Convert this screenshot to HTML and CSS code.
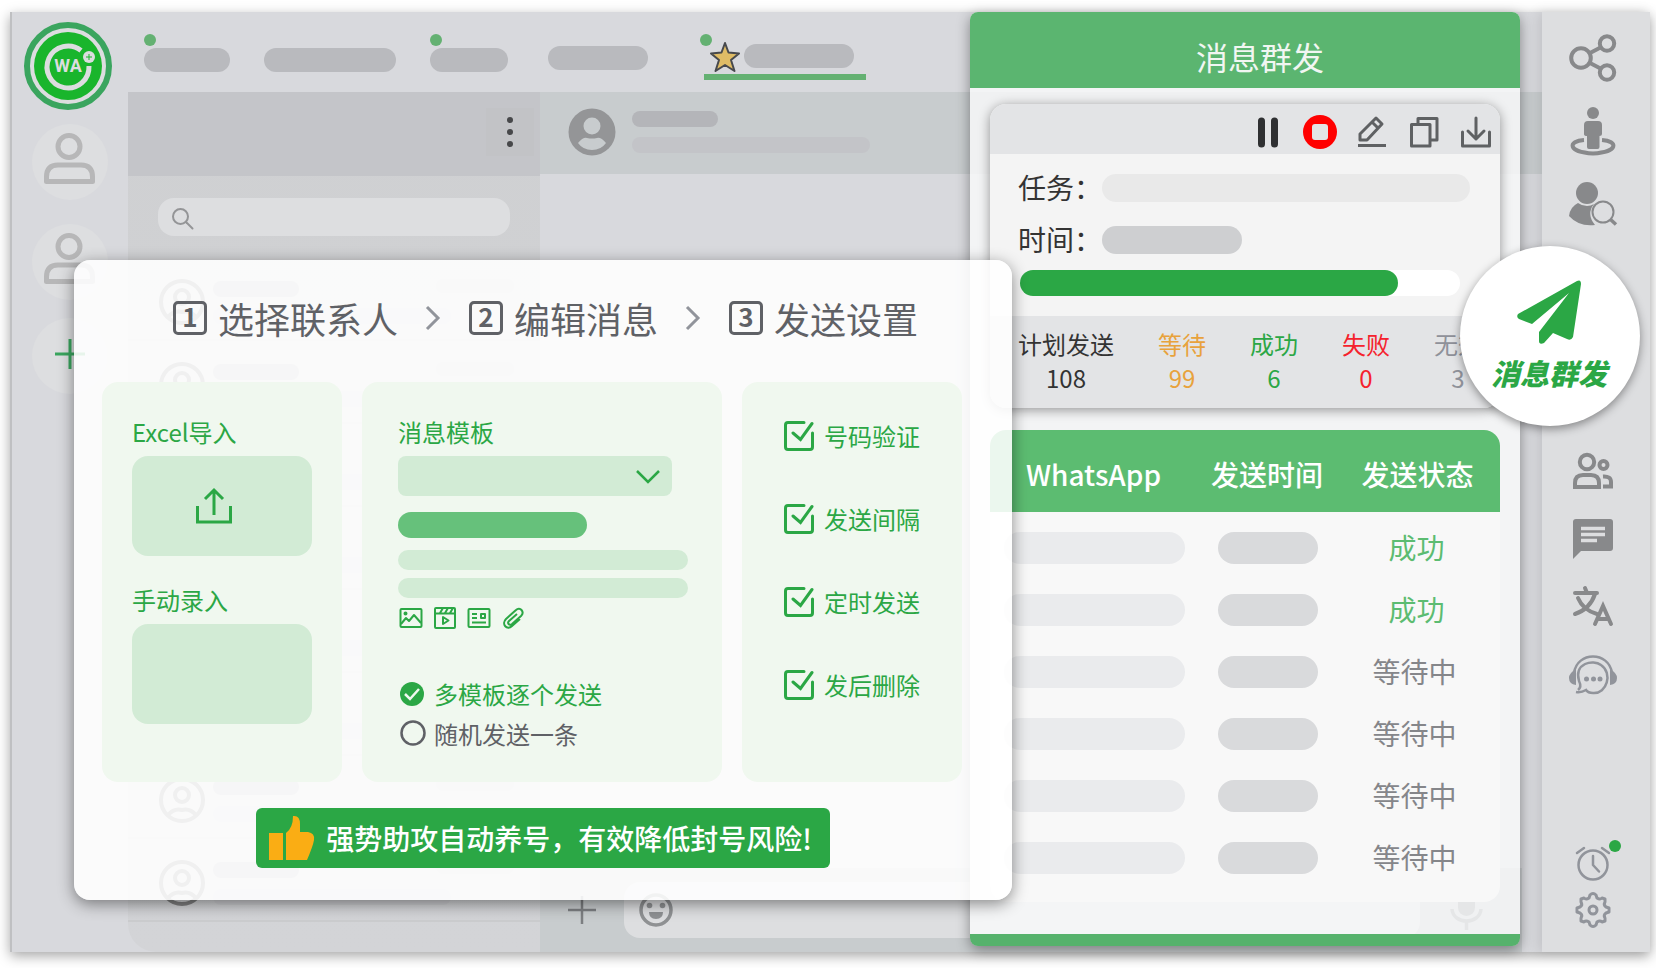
FILE: index.html
```html
<!DOCTYPE html>
<html lang="zh-CN">
<head>
<meta charset="utf-8">
<meta name="viewport" content="width=device-width, initial-scale=1">
<title>消息群发</title>
<link rel="stylesheet" href="styles.css">
</head>
<body>
<svg class="defs" aria-hidden="true">
  <symbol id="i-person" viewBox="0 0 52 54"><circle cx="25" cy="14.500" r="11" /><path d="M2.500 49.500V45Q2.500 33 14 33H37Q48.500 33 48.500 45V49.500Z" stroke-linejoin="round"/></symbol>
  <symbol id="i-contact" viewBox="0 0 46 46"><circle cx="23" cy="23" r="21"/><circle cx="23" cy="18" r="7"/><path d="M9 38Q15 31 23 33Q31 31 37 38"/></symbol>
  <symbol id="i-chev" viewBox="0 0 16 26"><path d="M2 2L13 13L2 24"/></symbol>
  <symbol id="i-check" viewBox="0 0 30 30"><path d="M20 1.500H4Q1.500 1.500 1.500 4V26Q1.500 28.500 4 28.500H26Q28.500 28.500 28.500 26V12"/><path d="M9 12L16.500 18.500L28 2.500"/></symbol>
</svg>

<div class="app">
  <nav class="rail-left">
    <svg class="logo" viewBox="0 0 88 88" role="img" aria-label="WA">
      <circle cx="44" cy="44" r="41" fill="#dcdddf" stroke="#3aa55e" stroke-width="6"/>
      <circle cx="44" cy="44" r="34" fill="#19b52c"/>
      <path d="M57 28.500A21 21 0 1 0 65 44" fill="none" stroke="#dcdddf" stroke-width="5"/>
      <circle cx="65" cy="35" r="6" fill="#dcdddf"/>
      <path d="M62 35H68M65 32V38" stroke="#19b52c" stroke-width="1"/>
      <text x="44" y="50" class="logo-text">WA</text>
    </svg>
    <button class="account" aria-label="账号 1"><svg><use href="#i-person"/></svg></button>
    <button class="account second" aria-label="账号 2"><svg><use href="#i-person"/></svg></button>
    <button class="account add" aria-label="添加账号"><svg viewBox="0 0 30 30"><path d="M0 15H30M15 0V30"/></svg></button>
  </nav>

  <div class="main">
    <div class="tabs">
      <button class="tab online w1" aria-label="标签 1"><i class="pill"></i></button>
      <button class="tab w2" aria-label="标签 2"><i class="pill"></i></button>
      <button class="tab online w3" aria-label="标签 3"><i class="pill"></i></button>
      <button class="tab w4" aria-label="标签 4"><i class="pill"></i></button>
      <button class="tab online active w5" aria-label="标签 5">
        <svg viewBox="0 0 32 32"><path d="M16 2L19.500 11.500L30 12.500L22 19L25.500 30L16 24L6.500 30L10 19L2 12.500L12.500 11.500Z"/></svg>
        <i class="pill"></i>
      </button>
    </div>
    <div class="workspace">
      <section class="list">
        <header class="list-head">
          <button class="more" aria-label="更多"><i></i><i></i><i></i></button>
        </header>
        <div class="search">
          <svg viewBox="0 0 22 22"><circle cx="8.500" cy="8.500" r="7.500"/><path d="M14.500 14.500L20.500 20.500"/></svg>
          <input type="search" aria-label="搜索">
        </div>
        <ul class="contacts">
          <li><svg><use href="#i-contact"/></svg><div><i></i><i></i></div><i class="when"></i></li>
          <li><svg><use href="#i-contact"/></svg><div><i></i><i></i></div><i class="when"></i></li>
          <li><svg><use href="#i-contact"/></svg><div><i></i><i></i></div><i class="when"></i></li>
          <li><svg><use href="#i-contact"/></svg><div><i></i><i></i></div><i class="when"></i></li>
          <li><svg><use href="#i-contact"/></svg><div><i></i><i></i></div><i class="when"></i></li>
          <li><svg><use href="#i-contact"/></svg><div><i></i><i></i></div><i class="when"></i></li>
          <li><svg><use href="#i-contact"/></svg><div><i></i><i></i></div><i class="when"></i></li>
          <li><svg><use href="#i-contact"/></svg><div><i></i><i></i></div><i class="when"></i></li>
        </ul>
      </section>
      <section class="chat">
        <header class="chat-head">
          <svg viewBox="0 0 48 48"><circle cx="24" cy="24" r="23.500" fill="#949597"/><ellipse cx="24" cy="18" rx="8.500" ry="8.500" fill="#c8ccce"/><path d="M10 35Q15 29 19 30Q24 31 29 30Q33 29 38 35Q33 42 24 42Q15 42 10 35Z" fill="#c8ccce"/></svg>
          <div><i class="line name"></i><i class="line status"></i></div>
        </header>
        <footer class="composer">
          <button class="plus" aria-label="附件"><svg viewBox="0 0 30 30"><path d="M1 15H29M15 1V29"/></svg></button>
          <div class="compose-box">
            <svg class="smile" viewBox="0 0 34 34"><circle cx="17" cy="17" r="15" fill="none" stroke="#8f9193" stroke-width="3.500"/><circle cx="10.500" cy="12.500" r="2.800"/><circle cx="23.500" cy="12.500" r="2.800"/><path d="M10 19H24Q24 26 17 26Q10 26 10 19Z"/></svg>
            <input type="text" aria-label="输入消息">
          </div>
          <button class="mic" aria-label="语音"><svg viewBox="0 0 32 40"><rect x="8" y="1" width="17" height="25" rx="8.500" fill="#8f9896"/><path d="M2 19C3 35 30 35 31 19M16.500 31V40" fill="none" stroke="#8f9896" stroke-width="3.500"/></svg></button>
        </footer>
      </section>
    </div>
  </div>

  <nav class="rail-right">
    <button aria-label="分享"><svg viewBox="0 0 48 48" class="stroke"><circle cx="12" cy="24" r="9.800"/><circle cx="38" cy="9.500" r="7.200"/><circle cx="38" cy="38.500" r="7.200"/><path d="M21 19L31.500 13.500M21 29L31.500 34.500"/></svg></button>
    <button aria-label="引流"><svg viewBox="0 0 48 48" class="solid"><circle cx="24" cy="6" r="6"/><path d="M19 14H29Q33 14 33 18V27Q33 29 30.500 29V40Q30.500 42 28.500 42H20Q18 42 18 40V29Q15 29 15 27V18Q15 14 19 14Z"/><path d="M15 33C-1 34-2 45 24 46.500C50 45 49 34 33 33" fill="none" stroke="#88898b" stroke-width="4"/></svg></button>
    <button aria-label="客户查询"><svg viewBox="0 0 48 48" class="solid"><circle cx="18" cy="13" r="11"/><path d="M9 23Q13 26 18 26Q22 26 25 24Q17 34 26 45Q10 47 0 36Q1 27 9 23Z"/><g fill="none" stroke="#88898b"><circle cx="34" cy="32" r="10.500" stroke-width="2"/><path d="M41.500 39.500L47 44.500" stroke-width="3.500"/></g></svg></button>
    <button class="after-float" aria-label="群组"><svg viewBox="0 0 48 48" class="stroke"><circle cx="18" cy="15" r="7.200"/><circle cx="34.500" cy="18" r="4"/><path d="M6 40V36Q6 28 14 28H22Q30 28 30 36V40Z"/><path d="M34 29.500Q42 29 42 35V39.500H34"/></svg></button>
    <button aria-label="快捷回复"><svg viewBox="0 0 48 48"><path d="M7 4H41Q44 4 44 7V33Q44 36 41 36H12L4 44V7Q4 4 7 4Z" fill="#88898b"/><path d="M12 13.500H36M12 19.500H36M12 25.500H28" stroke="#dddee0" stroke-width="3.500"/></svg></button>
    <button aria-label="翻译"><svg viewBox="0 0 48 48" class="stroke round"><path d="M6 10H28M16 5L18 10M26 11Q21 26 6 31M9 15Q14 27 28 31M26 41L34 23L42 41M30 36H38"/></svg></button>
    <button aria-label="客服"><svg viewBox="0 0 48 48" class="grey"><path d="M5 22C8 0 40 0 43 22M9 39Q13 36 10 30C5 12 24 8 32 14C44 22 38 43 24 42Q19 42 17 39Q12 42 7 41" fill="none" stroke="#91949b" stroke-width="2.500"/><path d="M7 18V34Q0 33 0 27Q0 22 7 18ZM41 18V34Q48 33 48 27Q48 22 41 18Z"/><circle cx="17.500" cy="28" r="2.500"/><circle cx="24.500" cy="28" r="2.500"/><circle cx="31" cy="28" r="2.500"/></svg></button>
    <span class="spring"></span>
    <button class="notify" aria-label="提醒"><svg viewBox="0 0 48 48" class="stroke grey2"><circle cx="24" cy="26" r="14.500"/><path d="M24 17V26L30 32.500M8 14L15 9M33 9L40 14"/></svg></button>
    <button aria-label="设置"><svg viewBox="0 0 48 48" class="stroke grey2 gear"><circle cx="24" cy="24" r="4"/><path d="M21 9Q24 6 27 9L28 12Q31 14 33 12L36 13L36 16Q34 19 37 21L40 22V26L37 27Q34 29 36 32L36 35L33 36Q31 34 28 36L27 39Q24 42 21 39L20 36Q17 34 15 36L12 35L12 32Q14 29 11 27L8 26V22L11 21Q14 19 12 16L12 13L15 12Q17 14 20 12Z"/></svg></button>
  </nav>

  <aside class="panel">
    <h1>消息群发</h1>
    <div class="panel-body">
      <section class="task">
        <div class="task-tools">
          <button aria-label="暂停"><svg viewBox="0 0 34 34"><path d="M10.500 6V29M23.500 6V29" stroke="#2f3032" stroke-width="7" stroke-linecap="round"/></svg></button>
          <button aria-label="停止"><svg viewBox="0 0 34 34"><circle cx="17" cy="17" r="17" fill="#f00"/><rect x="9" y="9" width="16" height="16" rx="3" fill="#e3e4e6"/></svg></button>
          <button aria-label="编辑"><svg viewBox="0 0 34 34" class="tool"><path d="M3 30.500H31M5 25V19L21 3L27 9L12 25ZM17 7L23 13"/></svg></button>
          <button aria-label="复制"><svg viewBox="0 0 34 34" class="tool"><path d="M4.500 9.500H23V31H4.500ZM11 9V3.500H30V25H24"/></svg></button>
          <button aria-label="下载"><svg viewBox="0 0 34 34" class="tool"><path d="M3.500 17V31H30.500V17M17 3V24M9 16L17 24L25 16" stroke-linecap="round"/></svg></button>
        </div>
        <div class="task-info">
          <div class="field"><span>任务：</span><i class="long"></i></div>
          <div class="field"><span>时间：</span><i class="short"></i></div>
          <div class="progress" role="progressbar" aria-label="发送进度" aria-valuenow="86"><i></i></div>
        </div>
        <dl class="stats">
          <div><dt>计划发送</dt><dd>108</dd></div>
          <div class="wait"><dt>等待</dt><dd>99</dd></div>
          <div class="ok"><dt>成功</dt><dd>6</dd></div>
          <div class="fail"><dt>失败</dt><dd>0</dd></div>
          <div class="void"><dt>无效</dt><dd>3</dd></div>
        </dl>
      </section>
      <div class="table-wrap">
        <table>
          <thead><tr><th class="c1">WhatsApp</th><th class="c2">发送时间</th><th>发送状态</th></tr></thead>
          <tbody>
            <tr><td><i class="num"></i></td><td><i class="time"></i></td><td class="state done">成功</td></tr>
            <tr><td><i class="num"></i></td><td><i class="time"></i></td><td class="state done">成功</td></tr>
            <tr><td><i class="num"></i></td><td><i class="time"></i></td><td class="state">等待中</td></tr>
            <tr><td><i class="num"></i></td><td><i class="time"></i></td><td class="state">等待中</td></tr>
            <tr><td><i class="num"></i></td><td><i class="time"></i></td><td class="state">等待中</td></tr>
            <tr><td><i class="num"></i></td><td><i class="time"></i></td><td class="state">等待中</td></tr>
          </tbody>
        </table>
      </div>
    </div>
  </aside>

  <section class="wizard">
    <ol class="steps">
      <li><b>1</b>选择联系人</li>
      <li class="sep" aria-hidden="true"><svg><use href="#i-chev"/></svg></li>
      <li><b>2</b>编辑消息</li>
      <li class="sep" aria-hidden="true"><svg><use href="#i-chev"/></svg></li>
      <li><b>3</b>发送设置</li>
    </ol>
    <div class="columns">
      <div class="col import">
        <label for="excel">Excel导入</label>
        <button id="excel" class="drop"><svg viewBox="0 0 36 36"><path d="M1.500 18V34H34.500V18M18 2V27M9 11L18 2L27 11"/></svg></button>
        <label for="manual">手动录入</label>
        <textarea id="manual" class="drop"></textarea>
      </div>
      <div class="col template">
        <label for="tpl">消息模板</label>
        <div class="select"><select id="tpl"></select><svg viewBox="0 0 24 14"><path d="M1 1L12 12L23 1"/></svg></div>
        <i class="bar strong"></i>
        <i class="bar"></i>
        <i class="bar last"></i>
        <div class="media">
          <button aria-label="图片"><svg viewBox="0 0 24 24"><rect x="1.500" y="3" width="21" height="18" rx="1"/><path d="M2 18L7 12L10 15L15 9L22 17"/><circle cx="6.500" cy="7.500" r="1"/></svg></button>
          <button aria-label="视频"><svg viewBox="0 0 24 24"><rect x="2" y="2" width="20" height="20" rx="1"/><path d="M2 7.500H22M7 7L10 2M12 7L15 2M17 7L20 2M10 11V18L15.500 14.500Z"/></svg></button>
          <button aria-label="名片"><svg viewBox="0 0 24 24"><rect x="1.500" y="3" width="21" height="18" rx="1"/><path d="M5 8H10M5 12H10M5 16.500H19M14 8H18V12H14Z"/></svg></button>
          <button aria-label="附件"><svg viewBox="0 0 24 24"><path d="M19 13L11 20C6 25 0 18 5 13L15 4C19 0 24 6 20 10L11 18C8 20 6 17 8 15L16 8"/></svg></button>
        </div>
        <div class="modes">
          <label class="on"><input type="radio" name="mode" checked><svg viewBox="0 0 26 26"><circle cx="12" cy="13" r="12" fill="#2ba745"/><path d="M5 13L10 18L19 8" fill="none" stroke="#f0f8ef" stroke-width="2.500"/></svg>多模板逐个发送</label>
          <label><input type="radio" name="mode"><svg viewBox="0 0 26 26"><circle cx="13" cy="12" r="11.500" fill="none" stroke="#5f6166" stroke-width="2.500"/></svg>随机发送一条</label>
        </div>
      </div>
      <div class="col options">
        <label><input type="checkbox" checked><svg><use href="#i-check"/></svg>号码验证</label>
        <label><input type="checkbox" checked><svg><use href="#i-check"/></svg>发送间隔</label>
        <label><input type="checkbox" checked><svg><use href="#i-check"/></svg>定时发送</label>
        <label><input type="checkbox" checked><svg><use href="#i-check"/></svg>发后删除</label>
      </div>
    </div>
    <p class="banner">
      <svg viewBox="0 0 46 46"><path d="M0 18H14V45H0ZM17 18Q24 13 24 1Q31 0 31 9V17H39Q46 18 45 25Q44 31 38 45H17Z" fill="#faad14"/></svg>
      强势助攻自动养号，有效降低封号风险!
    </p>
  </section>

  <button class="float">
    <svg viewBox="0 0 64 64"><path d="M60 1Q64-1 64 4L56 57Q54 61 50 59L36 53L27 63Q22 65 22 61V52L52 13L15 44L2 39Q-1 37 1 34Z" fill="#2ba745"/></svg>
    消息群发
  </button>
</div>
</body>
</html>
```

FILE: styles.css
```css
* { box-sizing: border-box; }

body {
  margin: 0;
  background: #fff;
  color: #333;
  font-family: "Noto Sans CJK SC", "Noto Sans", sans-serif;
  font-size: 24px;
  overflow-x: hidden;
}

button {
  display: block;
  margin: 0;
  padding: 0;
  border: 0;
  background: none;
  color: inherit;
  font: inherit;
}

input, select, textarea { margin: 0; border: 0; outline: 0; background: none; appearance: none; font: inherit; }
ul, ol, dl, dd, h1, p { margin: 0; padding: 0; list-style: none; font-weight: 400; }
i { display: block; font-style: normal; }
svg { display: block; flex: none; overflow: visible; }
.defs { position: absolute; width: 0; height: 0; }

.app {
  position: relative;
  display: flex;
  min-height: calc(100vh - 28px);
  margin: 12px 6px 16px 10px;
  border-left: 2px solid #bfc0c2;
  background: #d8d9dd;
  box-shadow: 0 4px 12px rgba(0, 0, 0, .35);
}

/* left rail */
.rail-left {
  display: flex;
  flex: none;
  flex-direction: column;
  align-items: center;
  width: 116px;
  padding-top: 10px;
}
.logo { width: 88px; height: 88px; margin: 0 4px 14px 0; }
.logo-text { fill: #dcdddf; font: 700 18px Roboto, sans-serif; text-anchor: middle; }
.account {
  display: flex;
  justify-content: center;
  width: 76px;
  height: 76px;
  margin-bottom: 24px;
  padding-top: 8px;
  border-radius: 50%;
  background: #dddee0;
}
.account svg { width: 52px; height: 54px; fill: none; stroke: #b7b7b8; stroke-width: 5; }
.account.second { margin-bottom: 18px; }
.account.add { padding-top: 21px; }
.account.add svg { width: 30px; height: 30px; stroke: #3aa55e; stroke-width: 3; }

/* tabs */
.main { display: flex; flex: 1; flex-direction: column; min-width: 0; }
.tabs { display: flex; height: 80px; padding-left: 16px; }
.tab { position: relative; display: flex; align-items: flex-start; height: 68px; padding-top: 36px; margin-right: 34px; }
.tab .pill { flex: 1; height: 24px; border-radius: 12px; background: #b9babe; }
.tab.online::before {
  content: "";
  position: absolute;
  top: 22px;
  left: 0;
  width: 12px;
  height: 12px;
  border-radius: 50%;
  background: #64b172;
}
.w1 { width: 86px; }
.w2 { width: 132px; }
.w3 { width: 78px; margin-right: 40px; }
.w4 { width: 100px; margin-right: 56px; padding-top: 34px; }
.w5 { width: 162px; margin-right: 0; padding: 32px 12px 0 5px; border-bottom: 6px solid #64b172; }
.w5 svg { width: 32px; height: 32px; margin: -3px 3px 0 0; fill: #dfbc66; stroke: #47494d; stroke-width: 2; stroke-linejoin: round; }
.tab.active::before { left: -4px; }

.workspace { display: flex; flex: 1; }

/* contact list */
.list {
  flex: none;
  width: 412px;
  border-bottom-left-radius: 28px;
  background: linear-gradient(#cfd0d2, #d3d4d7);
}
.list-head { display: flex; align-items: center; justify-content: flex-end; height: 84px; padding-right: 6px; background: #c4c5c9; }
.more { display: flex; flex-direction: column; align-items: center; justify-content: center; gap: 6px; width: 48px; height: 48px; margin-bottom: 4px; background: #c2c3c6; }
.more i { width: 6px; height: 6px; border-radius: 50%; background: #47484a; }
.search { display: flex; align-items: center; gap: 8px; height: 38px; margin: 22px 30px; padding: 3px 14px 0; border-radius: 16px; background: #dddee0; }
.search svg { width: 22px; height: 22px; fill: none; stroke: #949597; stroke-width: 2; stroke-linecap: round; }
.search input { flex: 1; min-width: 0; height: 30px; }
.contacts li { display: flex; align-items: flex-start; height: 83px; padding: 21px 26px 0 31px; border-bottom: 2px solid #cbccce; }
.contacts svg { width: 46px; height: 46px; margin-right: 8px; fill: none; stroke: #808182; stroke-width: 4; }
.contacts div { flex: 1; }
.contacts div i { width: 86px; height: 16px; margin: 2px 0 11px; border-radius: 8px; background: #b4b5b8; }
.contacts div i + i { width: 238px; background: #cdced1; }
.contacts .when { width: 78px; height: 14px; margin-left: -80px; border-radius: 7px; background: #c9cacd; }

/* conversation */
.chat { display: flex; flex: 1; flex-direction: column; justify-content: space-between; min-width: 0; }
.chat-head { display: flex; align-items: center; gap: 16px; height: 82px; padding: 0 28px 2px; background: #c8ccce; }
.chat-head svg { width: 48px; height: 48px; }
.line { height: 16px; border-radius: 8px; }
.line.name { width: 86px; margin-bottom: 10px; background: #b4b5b9; }
.line.status { width: 238px; background: #c3c4c8; }
.composer { display: flex; align-items: center; height: 84px; margin-right: 20px; padding-left: 27px; background: #c8ccce; }
.plus svg { width: 30px; height: 30px; stroke: #7d7f82; stroke-width: 2.5; }
.compose-box { display: flex; flex: 1; align-items: center; gap: 12px; min-width: 0; height: 56px; margin: 0 30px 0 27px; padding: 0 15px; border-radius: 16px; background: #dddee0; }
.compose-box input { flex: 1; min-width: 0; }
.smile { width: 34px; height: 34px; fill: #8f9193; }
.mic { margin-right: 40px; }
.mic svg { width: 32px; height: 40px; }

/* right rail */
.rail-right {
  position: relative;
  display: flex;
  flex: none;
  flex-direction: column;
  align-items: center;
  gap: 20px;
  width: 108px;
  padding: 22px 7px 18px 0;
  background: #dddee0;
  box-shadow: -4px 0 12px rgba(0, 0, 0, .1);
}
.rail-right button { position: relative; margin-bottom: 5px; }
.rail-right svg { width: 48px; height: 48px; }
.rail-right .after-float { margin-top: 194px; }
.rail-right .after-float, .rail-right .after-float ~ button { margin-bottom: 0; }
.spring { flex: 1; }
.rail-right .after-float ~ .notify { margin-bottom: -21px; }
.notify::after {
  content: "";
  position: absolute;
  top: 1px;
  right: -4px;
  width: 12px;
  height: 12px;
  border-radius: 50%;
  background: #2ba745;
}
.solid { fill: #88898b; }
.grey { fill: #91949b; }
.stroke { fill: none; stroke: #88898b; stroke-width: 4; }
.round { stroke-linecap: round; }
.grey2 { stroke: #91949b; stroke-width: 2.5; stroke-linecap: round; stroke-linejoin: round; }
.gear { stroke-width: 3; }

/* bulk message panel */
.panel {
  position: absolute;
  top: 0;
  right: 130px;
  bottom: 6px;
  width: 550px;
  border-bottom: 12px solid #56b26c;
  border-radius: 8px;
  background: rgba(250, 250, 251, .8);
  background-clip: padding-box;
  box-shadow: 0 4px 14px rgba(0, 0, 0, .4);
}
.panel h1 {
  height: 76px;
  padding: 10px 0 0 30px;
  border-radius: 8px 8px 0 0;
  background: #5bb570;
  color: #f1f6f2;
  font-size: 32px;
  line-height: 68px;
  text-align: center;
}
.panel-body { padding: 16px 20px 32px; }
.task { overflow: hidden; border-radius: 16px; background: #f4f4f4; box-shadow: 0 2px 12px rgba(0, 0, 0, .4); }
.task-tools { display: flex; justify-content: flex-end; gap: 18px; height: 50px; padding: 11px 7px; background: #e3e4e6; }
.task-tools button { height: 34px; }
.task-tools svg { width: 34px; height: 34px; }
.tool { fill: none; stroke: #5f6163; stroke-width: 3; stroke-linejoin: round; }
.task-info { padding: 20px 30px 20px 28px; }
.field { display: flex; align-items: center; height: 28px; margin-bottom: 24px; font-size: 28px; line-height: 26px; }
.field span { width: 84px; height: 28px; }
.field i { height: 28px; border-radius: 14px; }
.field .long { flex: 1; background: #e9e9e9; }
.field .short { width: 140px; background: #cecfd1; }
.progress { height: 26px; margin: -8px 10px 0 2px; border-radius: 13px; background: #fff; }
.progress i { width: 86%; height: 26px; border-radius: 13px; background: #2ba745; }
.stats { display: flex; gap: 44px; padding: 11px 0 13px 28px; background: #e3e4e6; line-height: 34px; text-align: center; white-space: nowrap; }
.wait { color: #e8a23c; }
.ok { color: #2ba745; }
.fail { color: #f5222d; }
.void { color: #8f9199; }

.table-wrap { margin-top: 22px; padding-bottom: 13px; overflow: hidden; border-radius: 16px; background: #f8f8f8; }
table { width: 100%; border-collapse: separate; border-spacing: 0; table-layout: fixed; font-size: 28px; line-height: 40px; text-align: center; }
th { height: 87px; padding: 6px 2px 0 0; border-bottom: 5px solid #f8f8f8; background: #5cbc71; color: #fff; font-weight: 500; }
.c1 { width: 41%; }
.c2 { width: 27%; }
td { height: 62px; padding: 0; color: #85868a; }
.state { padding: 0 8px 3px 0; }
.done { padding-right: 4px; color: #5cbc71; }
.num, .time { height: 32px; margin: 0 auto; border-radius: 16px; }
.num { margin: 0 14px; background: #eaebed; }
.time { width: 100px; background: #d9dadc; }

/* wizard */
.wizard {
  position: absolute;
  top: 248px;
  left: 62px;
  right: 638px;
  padding: 38px 50px 32px 28px;
  border-radius: 16px;
  background: rgba(255, 255, 255, .88);
  box-shadow: 0 4px 16px rgba(0, 0, 0, .45);
}
.steps { display: flex; align-items: center; height: 40px; margin-bottom: 44px; padding-left: 71px; color: #5f6166; font-size: 36px; line-height: 40px; white-space: nowrap; }
.steps li { display: flex; align-items: center; }
.steps b {
  width: 34px;
  height: 34px;
  margin-right: 11px;
  border: 3px solid #5f6166;
  border-radius: 5px;
  font: 700 26px/24px "Noto Sans CJK SC", sans-serif;
  text-align: center;
}
.steps .sep { margin: 0 28px 0 27px; }
.steps svg { width: 16px; height: 26px; fill: none; stroke: #91949b; stroke-width: 3; }
.columns { display: grid; grid-template-columns: 240fr 360fr 220fr; gap: 20px; color: #2ba745; line-height: 36px; white-space: nowrap; }
.col { border-radius: 16px; background: #f0f8ef; }
.import { display: flex; flex-direction: column; padding: 32px 30px 58px; }
.drop { display: grid; place-items: center; width: 100%; height: 100px; margin: 6px 0 26px; border-radius: 16px; background: #d2ebd5; resize: none; }
.import .drop:last-child { margin-bottom: 0; }
.drop svg { width: 36px; height: 36px; margin-right: 16px; fill: none; stroke: #2ba745; stroke-width: 3; }
.template { padding: 32px 34px 0 36px; }
.select { position: relative; height: 40px; margin: 6px 16px 16px 0; }
.template > label { display: block; }
.select select { width: 100%; height: 40px; border-radius: 8px; background: #d2ebd5; }
.select svg { position: absolute; top: 14px; right: 12px; width: 24px; height: 14px; fill: none; stroke: #2ba745; stroke-width: 2.5; pointer-events: none; }
.bar { height: 20px; margin-bottom: 8px; border-radius: 10px; background: #d2ebd5; }
.bar.strong { width: 65%; height: 26px; margin-bottom: 12px; border-radius: 13px; background: #66c17b; }
.media { display: flex; gap: 10px; height: 24px; margin-bottom: 44px; padding-left: 1px; }
.media svg { width: 24px; height: 24px; fill: none; stroke: #2ba745; stroke-width: 2; stroke-linejoin: round; }
.modes label { display: flex; align-items: center; height: 40px; padding-left: 2px; }
.modes label, .options label { position: relative; }
.modes input, .options input { position: absolute; width: 26px; height: 26px; opacity: 0; }
.modes svg { width: 26px; height: 26px; margin-right: 8px; }
.modes label + label { color: #5f6166; }
.options { display: flex; flex-direction: column; gap: 53px; padding: 39px 0 0 42px; }
.options label { display: flex; align-items: center; height: 30px; }
.options svg { width: 30px; height: 30px; margin-right: 10px; fill: none; stroke: #2ba745; stroke-width: 3; stroke-linecap: round; }
.wizard .banner { margin-right: -22px; margin-left: 0; }
.banner {
  display: flex;
  align-items: center;
  width: fit-content;
  height: 60px;
  padding: 0 18px 0 13px;
  border-radius: 6px;
  background: #2ba745;
  color: #fff;
  font-size: 28px;
  font-weight: 500;
  white-space: nowrap;
}
.wizard .banner { margin: 26px auto 0; transform: none; }
.banner svg { width: 46px; height: 46px; margin-right: 11px; }
.wizard { padding-right: 28px; }
.columns { margin-right: 22px; }

/* floating feature badge */
.float {
  position: absolute;
  top: 234px;
  right: 10px;
  display: flex;
  flex-direction: column;
  align-items: center;
  gap: 8px;
  width: 180px;
  height: 180px;
  padding: 34px 2px 0 0;
  border-radius: 50%;
  background: #fff;
  box-shadow: 0 3px 10px rgba(0, 0, 0, .4);
  color: #2ba745;
  font-size: 29px;
  font-style: italic;
  font-weight: 900;
  line-height: 40px;
}
.float svg { width: 64px; height: 64px; }
```
